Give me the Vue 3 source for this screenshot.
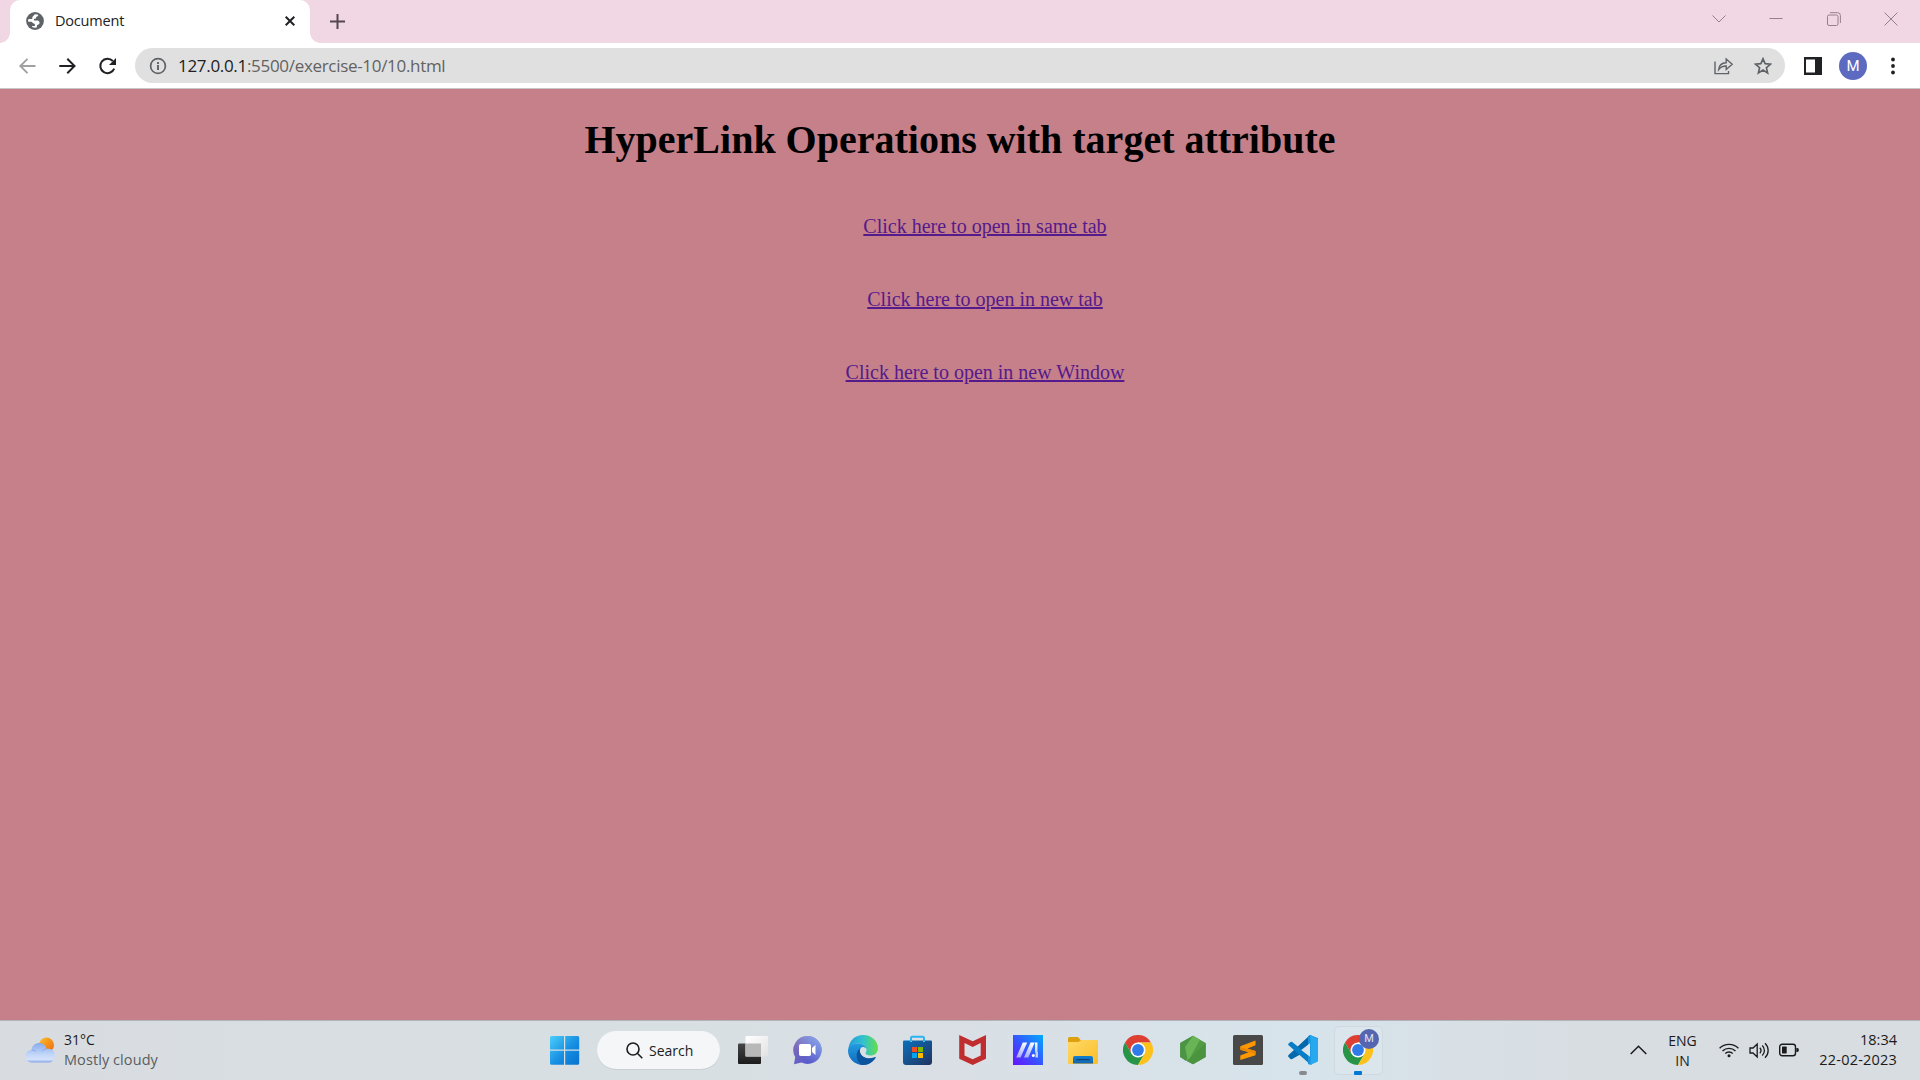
<script setup>
const links = [
  'Click here to open in same tab',
  'Click here to open in new tab',
  'Click here to open in new Window',
]
</script>

<template>
  <div class="screen">
    <header class="tabstrip">
      <div class="tab">
        <svg class="globe" width="18" height="18" viewBox="0 0 18 18">
          <circle cx="9" cy="9" r="8.900" fill="#5f6368" />
          <path d="M9 2.200c1.300-.1 2.300.1 3.300.6-.2 1.200-.7 1.900-1.900 2L9.800 6.500 8 7v1.500h3.200c1.800.2 2.600 1.400 2.300 2.800-.3 1.300-1.500 1.300-2.300 1.800l-.5 2.500c-1.700.5-3.300.2-4.600-.5l.1-1.200h2.200c.5 0 .6-.5.6-1 0-1-.9-1.500-1.800-1.600L5.500 9.800H2.200C2 8.600 2.200 8 2.500 7h3c1.500 0 .3-1.800 1.300-2.500C7.600 4 7.800 2.800 9 2.200z" fill="#fff" />
        </svg>
        <span class="tab-title">Document</span>
        <svg class="tab-close" width="10" height="10" viewBox="0 0 10 10">
          <path d="M.7.7l8.600 8.600M9.300.7.7 9.300" stroke="#202124" stroke-width="2" />
        </svg>
      </div>
      <svg class="plus" width="15" height="15" viewBox="0 0 15 15">
        <path d="M7.500 0v15M0 7.500h15" stroke="#55474f" stroke-width="2" />
      </svg>
      <div class="win-controls">
        <svg width="14" height="14" viewBox="0 0 14 14"><path d="M.5 3.500 7 10l6.500-6.500" /></svg>
        <svg width="14" height="14" viewBox="0 0 14 14"><path d="M.5 6.500h13" /></svg>
        <svg width="14" height="14" viewBox="0 0 14 14">
          <rect x=".5" y="3" width="10.500" height="10.500" rx="1.500" />
          <path d="M3 .7h7.500a2.800 2.800 0 0 1 2.900 2.800v7.500" />
        </svg>
        <svg width="14" height="14" viewBox="0 0 14 14"><path d="m.5.5 13 13M13.500.5l-13 13" /></svg>
      </div>
    </header>

    <nav class="toolbar">
      <svg class="nav-icon" width="20" height="20" viewBox="0 0 20 20" fill="none" stroke="#a0a0a2" stroke-width="1.900">
        <path d="M18.500 10H3.500M10.500 2.800 3.300 10l7.200 7.200" />
      </svg>
      <svg class="nav-icon" width="20" height="20" viewBox="0 0 20 20" fill="none" stroke="#202124" stroke-width="2">
        <path d="M2.300 10h15M10.300 2.800 17.500 10l-7.200 7.200" />
      </svg>
      <svg class="nav-icon" width="20" height="20" viewBox="0 0 20 20">
        <path d="M17.200 12.600A7.200 7.200 0 1 1 15.800 5" fill="none" stroke="#202124" stroke-width="2" />
        <path d="M19 2v7h-7z" fill="#202124" />
      </svg>
      <div class="omnibox">
        <svg width="18" height="18" viewBox="0 0 18 18" fill="none" stroke="#5f6368">
          <circle cx="9" cy="9" r="7.400" stroke-width="1.700" />
          <path d="M9 8v5M9 5v1.900" stroke-width="1.900" />
        </svg>
        <span class="url"><b>127.0.0.1</b>:5500/exercise-10/10.html</span>
        <svg class="share" width="20" height="18" viewBox="0 0 20 18" fill="none" stroke="#5f6368" stroke-width="1.400">
          <path d="M1 4.500V16.600h13.500V14" />
          <path d="M4.700 12.500c.4-4.600 3-6.600 7.500-6.800V2l6 5.300-6 5.200V9c-3.500 0-5.600.8-7.500 3.500z" />
        </svg>
        <svg width="18" height="18" viewBox="0 0 18 18" fill="none" stroke="#5f6368" stroke-width="1.700">
          <path d="m9 1.800 2.100 4.900 5.300.5-4 3.500 1.200 5.200L9 13.100l-4.600 2.800 1.200-5.200-4-3.500 5.300-.5z" />
        </svg>
      </div>
      <svg class="panel" width="18" height="18" viewBox="0 0 18 18">
        <rect width="18" height="18" fill="#202124" />
        <rect x="2" y="2.500" width="9" height="13" fill="#fff" />
      </svg>
      <div class="avatar">M</div>
      <svg class="menu" width="4" height="18" viewBox="0 0 4 18" fill="#202124">
        <circle cx="2" cy="2.500" r="1.900" /><circle cx="2" cy="9" r="1.900" /><circle cx="2" cy="15.500" r="1.900" />
      </svg>
    </nav>

    <main class="page">
      <h1>HyperLink Operations with target attribute</h1>
      <ul>
        <li v-for="l in links" :key="l"><a href="#">{{ l }}</a></li>
      </ul>
    </main>

    <footer class="taskbar">
      <div class="weather">
        <svg width="31" height="27" viewBox="0 0 31 27">
          <defs>
            <linearGradient id="sun" x1="0" y1="0" x2="1" y2="1"><stop stop-color="#fbc02a" /><stop offset="1" stop-color="#ee6510" /></linearGradient>
            <linearGradient id="cloud" x1="0" y1="0" x2="0" y2="1"><stop stop-color="#88acee" /><stop offset=".65" stop-color="#c8daf9" /><stop offset=".85" stop-color="#d3e1fb" /><stop offset="1" stop-color="#83a3e7" /></linearGradient>
          </defs>
          <circle cx="21.500" cy="8" r="7.500" fill="url(#sun)" />
          <path d="M6.500 13C7.500 4 20 4 21.500 12c5-1.500 8.500 2 8.500 6.500S27 25.500 24 25.500H7C-2 25.500-1.500 13 6.500 13z" fill="url(#cloud)" />
          <path d="M17 14.500c1.500-2 3-2.500 4.500-2.500M6.500 13c2 0 3.500.5 4.500 1.500" stroke="#7b9fe6" fill="none" opacity=".7" />
        </svg>
        <div class="weather-text"><span>31°C</span><span class="cond">Mostly cloudy</span></div>
      </div>

      <div class="cell">
        <svg width="30" height="30" viewBox="0 0 30 30">
          <defs><linearGradient id="win" x1="0" y1="0" x2="30" y2="30" gradientUnits="userSpaceOnUse"><stop stop-color="#4cd0fb" /><stop offset=".55" stop-color="#168ee2" /><stop offset="1" stop-color="#0870d0" /></linearGradient></defs>
          <path d="M1.500 1H14v13.500H0v-12A1.500 1.500 0 0 1 1.500 1zM15.200 1h12.500A1.500 1.500 0 0 1 29.200 2.500v12h-14zM0 15.700h14v14H1.500A1.500 1.500 0 0 1 0 28.200zM15.200 15.700h14v12.500a1.500 1.500 0 0 1-1.500 1.500H15.200z" fill="url(#win)" />
        </svg>
      </div>

      <div class="search">
        <svg width="17" height="17" viewBox="0 0 17 17" fill="none" stroke="#1d1d1d" stroke-width="1.600">
          <circle cx="7" cy="7" r="6" /><path d="m11.300 11.300 5 5" />
        </svg>
        <span>Search</span>
      </div>

      <div class="cell">
        <svg width="30" height="30" viewBox="0 0 30 30">
          <defs>
            <linearGradient id="tvb" x1="0" y1="0" x2="0" y2="1"><stop stop-color="#454545" /><stop offset="1" stop-color="#1c1c1c" /></linearGradient>
            <linearGradient id="tvw" x1="0" y1="0" x2="1" y2="1"><stop stop-color="#fff" /><stop offset="1" stop-color="#e2e2e4" /></linearGradient>
          </defs>
          <rect y="8.500" width="23" height="20.500" rx="1" fill="url(#tvb)" />
          <rect x="7.500" y="1" width="22.500" height="20.500" rx="1" fill="url(#tvw)" />
          <path d="M7.500 8.500H23v13H7.500z" fill="#b8b8b8" />
        </svg>
      </div>

      <div class="cell">
        <svg width="30" height="30" viewBox="0 0 30 30">
          <defs><linearGradient id="chat" x1="0" y1="0" x2="1" y2="1"><stop stop-color="#8e64a9" /><stop offset=".35" stop-color="#7266bd" /><stop offset=".7" stop-color="#5a5bcc" /><stop offset="1" stop-color="#5254bd" /></linearGradient>
            <linearGradient id="chat2" x1="1" y1="0" x2=".3" y2=".7"><stop stop-color="#8aaef0" /><stop offset="1" stop-color="#8aaef0" stop-opacity="0" /></linearGradient></defs>
          <path d="M14.500 1a14 14 0 1 1-6 26.600L1 29.300 2.200 22A14 14 0 0 1 14.500 1z" fill="url(#chat)" />
          <path d="M14.500 1a14 14 0 1 1-6 26.600L1 29.300 2.200 22A14 14 0 0 1 14.500 1z" fill="url(#chat2)" />
          <rect x="6" y="9" width="12" height="12" rx="1.800" fill="#fff" />
          <path d="m19 13 3.500-3v10L19 17z" fill="#fff" />
        </svg>
      </div>

      <div class="cell">
        <svg width="30" height="30" viewBox="0 0 30 30">
          <defs>
            <linearGradient id="eg1" x1="0" y1=".5" x2="1" y2=".5"><stop stop-color="#249bdd" /><stop offset=".5" stop-color="#30c2cd" /><stop offset="1" stop-color="#65de49" /></linearGradient>
            <linearGradient id="eg2" x1="0" y1="0" x2="0" y2="1"><stop stop-color="#219ddf" /><stop offset="1" stop-color="#1269bd" /></linearGradient>
          </defs>
          <path d="M.4 13.500C1.500 5 7.500 0 15 0c9 0 15 6.500 15 13 0 5-3.500 7.500-7.500 7.500-3 0-5-1-5-2.200 0-.8 1-1.300 1-3.300 0-3-3-6.500-8.500-6.500C5.500 8.500 2 10.500.4 13.500z" fill="url(#eg1)" />
          <path d="M0 15.500C0 11 5 8.500 9.800 8.500c4.500 0 7.700 2.300 8.500 5-2.800-3-6.500-1.500-6.500 2.300 0 6 6.700 9.700 15.200 7C24.500 27 20 30 15 30 6.500 30 0 23.500 0 15.500z" fill="url(#eg2)" />
          <path d="M12.500 13c-5 3.500-5.500 11 .5 16.800 6 1 11.500-2 14.600-6.800.4-.8-.2-1.100-1-.7-7.500 3-14.600-.7-14.800-6.500 0-1.100.2-2.100.7-2.800z" fill="#0c549c" />
        </svg>
      </div>

      <div class="cell">
        <svg width="30" height="30" viewBox="0 0 30 30">
          <defs><linearGradient id="store" x1="0" y1="0" x2="1" y2="1"><stop stop-color="#0b70bd" /><stop offset="1" stop-color="#21335e" /></linearGradient></defs>
          <path d="M8 7V3a1.200 1.200 0 0 1 1.200-1.200h10.600A1.200 1.200 0 0 1 21 3v4" fill="none" stroke="#29b4ef" stroke-width="2" />
          <path d="M1 5.500h27q1 0 1 1V27a3 3 0 0 1-3 3H3a3 3 0 0 1-3-3V6.500q0-1 1-1z" fill="url(#store)" />
          <path d="M7 5.500h2V7H7zm13 0h2V7h-2z" fill="#4cc6f3" />
          <path d="M9 12h5v5H9z" fill="#f25022" /><path d="M15 12h5v5h-5z" fill="#7fba00" />
          <path d="M9 18h5v5H9z" fill="#00a4ef" /><path d="M15 18h5v5h-5z" fill="#ffb900" />
        </svg>
      </div>

      <div class="cell">
        <svg width="30" height="30" viewBox="0 0 30 30">
          <path d="m1.200 0 13.500 6.300L28 0v23.800L14.700 30 1.200 23.800zM6.500 8v12.500l8.200 3.800 8-3.800V8l-8 4z" fill="#c02d2f" fill-rule="evenodd" />
        </svg>
      </div>

      <div class="cell">
        <svg width="30" height="30" viewBox="0 0 30 30">
          <defs><linearGradient id="asus" x1="0" y1="1" x2="1" y2="0"><stop stop-color="#6713ff" /><stop offset=".45" stop-color="#3a4fff" /><stop offset="1" stop-color="#00abff" /></linearGradient>
            <linearGradient id="slash" x1="0" y1="1" x2="0" y2="0"><stop stop-color="#dce2ff" stop-opacity=".65" /><stop offset="1" stop-color="#fff" /></linearGradient></defs>
          <rect width="30" height="30" fill="url(#asus)" />
          <path d="m3.200 22.500 6.600-15h4.400l-6.600 15zM11 22.500l6.500-15h4.300l-6.500 15zM22 7.500h2.500v11L22 17z" fill="url(#slash)" />
          <circle cx="20.300" cy="20.500" r="1.500" fill="#fff" /><path d="M22.500 17H25v5.500h-2.500z" fill="#bfccff" />
        </svg>
      </div>

      <div class="cell">
        <svg width="30" height="30" viewBox="0 0 30 30">
          <defs><linearGradient id="fold" x1="0" y1="0" x2="1" y2="1"><stop stop-color="#ffda68" /><stop offset="1" stop-color="#fabd27" /></linearGradient>
            <linearGradient id="tray" x1="0" y1="0" x2="0" y2="1"><stop stop-color="#127fd0" /><stop offset="1" stop-color="#1565b1" /></linearGradient></defs>
          <path d="M0 3.500Q0 2 1.500 2H10l3 3.500h16q1 0 1 1V12H0z" fill="#dfa00e" />
          <path d="M0 7h10.500l3-2H29q1 0 1 1v21.500Q30 29 28.500 29h-27Q0 29 0 27.500z" fill="url(#fold)" />
          <path d="M5 28.500V23a2 2 0 0 1 2-2h16a2 2 0 0 1 2 2v5.500z" fill="url(#tray)" />
          <path d="M8.500 24.600h13" stroke="#0d4677" stroke-width="1.300" />
        </svg>
      </div>

      <div class="cell">
        <svg width="30" height="30" viewBox="0 0 30 30">
          <path d="M2 7.500A15 15 0 0 1 28 7.500H15L8.500 18.750z" fill="#dd3f32" />
          <path d="M2 7.500A15 15 0 0 0 15 30l6.500-11.250h-13z" fill="#289447" />
          <path d="M28 7.500A15 15 0 0 1 15 30l6.500-11.250L15 7.500z" fill="#fcc21b" />
          <circle cx="15" cy="15" r="7.500" fill="#fff" /><circle cx="15" cy="15" r="5.900" fill="#307bea" />
        </svg>
      </div>

      <div class="cell">
        <svg width="30" height="30" viewBox="0 0 30 30">
          <path d="m15 .8 12.700 7.200v14L15 29.300 2.200 22V8z" fill="#539b43" />
          <path d="M2.200 8 15 .8 8 26 2.200 22z" fill="#4c9445" />
          <path d="m15 .8 7 4L10 26.500 7 12z" fill="#69b454" />
          <path d="m27.700 8-19 18 6.300 3.300L27.700 22z" fill="#4a943f" />
        </svg>
      </div>

      <div class="cell">
        <svg width="30" height="30" viewBox="0 0 30 30">
          <rect width="30" height="30" rx="1.500" fill="#484848" />
          <path d="M7.300 11.300 22.500 5.500v4.700l-8 3.200 8 2.500v4.300L7.300 25v-4.500l8.300-3.300-8.300-2.500z" fill="#ff9800" />
          <path d="m7.300 14.700 0-2.500 15.200 3.800v3z" fill="#ec8800" />
        </svg>
      </div>

      <div class="cell running">
        <svg width="30" height="30" viewBox="0 0 30 30">
          <path d="M22 0 30 3.200v6.300L4.200 24q-.9.600-1.700 0L.6 22q-1-.9 0-1.900z" fill="#0668ac" />
          <path d="M2.500 7q.8-.6 1.700 0L24 23v6.500l-2-.3L.6 10.200q-1-.9 0-1.800z" fill="#087cc4" />
          <path d="m22 0 7 3q1 .5 1 1.500v21q0 1-1 1.500l-7 3q-1 .2-1.500-.4 1.500.7 1.500-1.400V1.800Q22-.3 20.500.4 21-.3 22 0z" fill="#28a8ef" />
          <path d="m20 .7 2.500 1.500v26L20 29.400z" fill="#1a92dc" />
          <path d="M22 8.300v13.400L13.200 15z" fill="#d8e4eb" />
        </svg>
      </div>

      <div class="cell active">
        <svg width="30" height="30" viewBox="0 0 30 30">
          <path d="M2 7.500A15 15 0 0 1 28 7.500H15L8.500 18.750z" fill="#dd3f32" />
          <path d="M2 7.500A15 15 0 0 0 15 30l6.500-11.250h-13z" fill="#289447" />
          <path d="M28 7.500A15 15 0 0 1 15 30l6.500-11.250L15 7.500z" fill="#fcc21b" />
          <circle cx="15" cy="15" r="7.500" fill="#fff" /><circle cx="15" cy="15" r="5.900" fill="#307bea" />
        </svg>
        <span class="badge">M</span>
      </div>

      <div class="tray">
        <svg class="chev" width="17" height="10" viewBox="0 0 17 10" fill="none" stroke="#1b1b1b" stroke-width="1.500"><path d="m.7 9 7.800-7.800L16.300 9" /></svg>
        <div class="lang"><span>ENG</span><span>IN</span></div>
        <svg class="wifi" width="20" height="16" viewBox="0 0 20 16" fill="none" stroke="#1b1b1b" stroke-width="1.400">
          <path d="M.6 6.300a13.300 13.300 0 0 1 18.800 0M3.500 9a9.300 9.300 0 0 1 13 0M6.300 11.500a5.300 5.300 0 0 1 7.400 0" />
          <circle cx="10" cy="13.700" r="1.500" fill="#1b1b1b" stroke="none" />
        </svg>
        <svg class="vol" width="21" height="17" viewBox="0 0 21 17" fill="none" stroke="#1b1b1b" stroke-width="1.300">
          <path d="M1 6v5h3l4.200 4V2L4 6zM10.800 5.800a4 4 0 0 1 0 5.400M13.300 3.500a7 7 0 0 1 0 10" />
          <path d="M16 1.200a10 10 0 0 1 0 14.600" />
        </svg>
        <svg class="bat" width="20" height="14" viewBox="0 0 20 14">
          <rect x=".7" y="1.200" width="15.800" height="11.600" rx="2.500" fill="none" stroke="#1b1b1b" stroke-width="1.400" />
          <rect x="3" y="3.500" width="4.700" height="7" rx=".7" fill="#1b1b1b" />
          <path d="M17.300 5h1q1.600 0 1.600 2t-1.600 2h-1z" fill="#1b1b1b" />
        </svg>
        <div class="clock"><span>18:34</span><span class="date">22-02-2023</span></div>
      </div>
    </footer>
  </div>
</template>

<style>
body { margin: 0; overflow: hidden; }
</style>

<style scoped>
.screen { width: 1920px; height: 1080px; display: flex; flex-direction: column; overflow: hidden; font-family: "Open Sans", "Noto Sans", sans-serif; }
.screen * { box-sizing: border-box; }
svg { display: block; flex: none; }

.tabstrip { height: 43px; flex: none; background: #f1d7e3; display: flex; padding-left: 10px; }
.tab { position: relative; width: 300px; height: 43px; background: #fff; border-radius: 10px 10px 0 0; display: flex; align-items: center; padding: 0 15px 1px 16px; }
.tab::before, .tab::after { content: ""; position: absolute; bottom: 0; width: 10px; height: 10px; }
.tab::before { left: -10px; background: radial-gradient(circle at 0 0, transparent 9.500px, #fff 10px); }
.tab::after { right: -10px; background: radial-gradient(circle at 100% 0, transparent 9.500px, #fff 10px); }
.tab-title { margin-left: 11px; font-size: 14.500px; line-height: 20px; color: #202124; letter-spacing: -.2px; }
.tab-close { margin-left: auto; }
.plus { margin: 14px 0 0 20px; }
.win-controls { margin-left: auto; display: flex; gap: 43.500px; padding: 12px 22px 0 0; }
.win-controls svg { fill: none; stroke: #94808b; stroke-width: 1; }

.toolbar { height: 46px; flex: none; background: #fff; border-bottom: 1px solid #c9c7c8; display: flex; align-items: center; padding: 0 22px 0 17px; }
.nav-icon { margin-right: 20px; }
.omnibox { width: 1650px; height: 35px; margin-left: -2px; border-radius: 18px; background: #e0e0e0; display: flex; align-items: center; padding: 0 13.500px; }
.url { margin-left: 11.500px; font-size: 17px; line-height: 24px; color: #626262; white-space: nowrap; letter-spacing: -.31px; }
.url b { font-weight: 400; color: #202124; }
.share { margin-left: auto; margin-right: 20px; }
.panel { margin-left: 19px; }
.avatar { width: 28px; height: 28px; margin-left: 17px; border-radius: 50%; background: #5c6bc0; color: #fff; font: 15px/28px Roboto, sans-serif; text-align: center; }
.menu { margin-left: auto; margin-right: 3.500px; }

.page { flex: 1; min-height: 0; background: #c5808a; font-family: "Liberation Serif", "Times New Roman", serif; text-align: center; padding: 28px 10px 0; }
h1 { margin: 0; font-size: 40px; line-height: 46px; color: #000; }
ul { list-style: none; margin: 52px 0 0; padding: 0 0 0 50px; }
li { height: 73px; font-size: 20px; line-height: 23px; }
a { color: #551a8b; text-decoration: underline; }

.taskbar { height: 60px; flex: none; border-top: 1px solid #b0b4b8; background: linear-gradient(90deg, #d8dce1 0, #d8dfe2 30%, #d9dfe5 50%, #d7e4eb 68%, #d8dde2 82%, #d8dde1 100%); display: flex; align-items: center; color: #1b1b1b; font-size: 14px; line-height: 20px; }
.weather { width: 537.500px; padding-left: 24.500px; display: flex; align-items: center; }
.weather svg { margin-top: -1px; }
.weather-text { margin: -2px 0 0 8.500px; display: flex; flex-direction: column; }
.cond { color: #5a5d60; font-size: 14.500px; letter-spacing: .08px; }
.cell { position: relative; width: 55px; height: 49px; flex: none; display: flex; align-items: center; justify-content: center; }
.cell > svg { margin-top: -1px; }
.search { width: 123px; height: 38px; margin: -1px 5.500px 0 4.500px; border-radius: 19px; background: #f4f6f8; box-shadow: 0 1px 0 #c9cfd3; display: flex; align-items: center; padding-left: 28.500px; gap: 6.500px; }
.search span { padding-top: 1px; }
.running::after, .active::after { content: ""; position: absolute; bottom: 0; width: 8px; height: 4px; border-radius: 2px; background: #868a8e; }
.active::after { background: #0078d4; border-radius: 1px; }
.active::before { content: ""; position: absolute; inset: 0 3px; border: 1px solid #cfd9df; border-radius: 5px; background: #dae6ec; }
.active > svg { position: relative; }
.badge { position: absolute; left: 28.500px; top: 3px; width: 20px; height: 20px; border-radius: 50%; background: #5565b0; color: #dfe2f2; font: 11px/20px Roboto, sans-serif; text-align: center; }
.tray { margin-left: auto; padding-right: 23px; display: flex; align-items: center; }
.chev, .wifi, .vol, .bat { margin-top: -1px; }
.lang { width: 40px; margin: 0 16.500px 0 15.500px; display: flex; flex-direction: column; align-items: center; }
.vol { margin-left: 10px; }
.bat { margin-left: 9px; }
.clock { width: 79px; margin: -2px 0 0 19px; display: flex; flex-direction: column; align-items: flex-end; white-space: nowrap; font-size: 14.500px; }
.date { letter-spacing: .2px; }
</style>
